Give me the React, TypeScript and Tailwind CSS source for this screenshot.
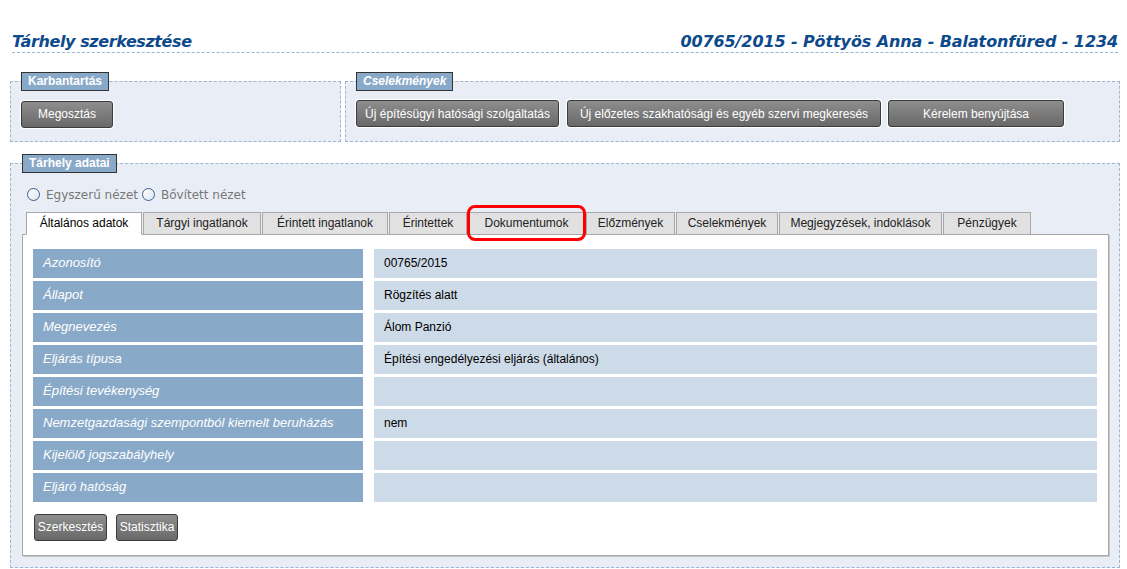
import React from "react";

const tabs = [
    { label: "Általános adatok", w: "w-[116px]", active: true },
    { label: "Tárgyi ingatlanok", w: "w-[118px]" },
    { label: "Érintett ingatlanok", w: "w-[126px]" },
    { label: "Érintettek", w: "w-[78px]" },
    { label: "Dokumentumok", w: "w-[117px]", marked: true },
    { label: "Előzmények", w: "w-[89px]" },
    { label: "Cselekmények", w: "w-[102px]" },
    { label: "Megjegyzések, indoklások", w: "w-[163px]" },
    { label: "Pénzügyek", w: "w-[88px]" },
];

const rows = [
    { label: "Azonosító", value: "00765/2015" },
    { label: "Állapot", value: "Rögzítés alatt" },
    { label: "Megnevezés", value: "Álom Panzió" },
    { label: "Eljárás típusa", value: "Építési engedélyezési eljárás (általános)" },
    { label: "Építési tevékenység", value: "" },
    { label: "Nemzetgazdasági szempontból kiemelt beruházás", value: "nem" },
    { label: "Kijelölő jogszabályhely", value: "" },
    { label: "Eljáró hatóság", value: "" },
];

function GrayButton({ children, className = "" }: { children: React.ReactNode; className?: string }) {
    return (
        <button
            className={
                "h-[27px] rounded-[3px] border border-[#3c3c3c] bg-gradient-to-b from-[#8e8e8e] to-[#696969] text-white text-[12px] shadow-[0_0_0_1px_#fff] font-['Liberation_Sans',Arial,sans-serif] whitespace-nowrap " +
                className
            }
        >
            {children}
        </button>
    );
}

function Legend({ children, italic }: { children: React.ReactNode; italic?: boolean }) {
    return (
        <legend
            className={
                "h-[19px] px-[6px] border border-[#333] bg-[#89a9c8] text-white font-bold text-[12px] leading-[17px] font-['Liberation_Sans',Arial,sans-serif] " +
                (italic ? "italic" : "")
            }
        >
            {children}
        </legend>
    );
}

function Radio({ label }: { label: string }) {
    return (
        <label className="flex items-center gap-[6px]">
            <span className="w-[13px] h-[13px] rounded-full border-[1.5px] border-[#3d5f8f] bg-gradient-to-br from-white to-[#dde6f0]"></span>
            <span>{label}</span>
        </label>
    );
}

export default function App() {
    return (
        <div className="w-[1127px] h-[569px] overflow-hidden bg-white pl-[10px] pr-[7px]">
            {/* header */}
            <div className="mx-[2px] h-[53px] flex items-end justify-between pb-0 border-b border-dashed border-[#9db5cf] text-[#0d4a8b] font-bold italic font-['DejaVu_Sans',Verdana,sans-serif]">
                <h1 className="text-[16px] leading-[21px] tracking-[-0.4px]">Tárhely szerkesztése</h1>
                <h2 className="text-[16px] leading-[21px] tracking-[-0.1px]">00765/2015 - Pöttyös Anna - Balatonfüred - 1234</h2>
            </div>

            {/* top fieldsets */}
            <div className="flex gap-[4px] mt-[19px] w-[1110px]">
                <fieldset className="w-[331px] border border-dashed border-[#9db5cf] bg-[#e9eef6] pl-[10px] pt-[9px] pb-[13px]">
                    <Legend>Karbantartás</Legend>
                    <GrayButton className="w-[92px]">Megosztás</GrayButton>
                </fieldset>
                <fieldset className="flex-1 border border-dashed border-[#9db5cf] bg-[#e9eef6] pl-[10px] pt-[9px] pb-[13px]">
                    <Legend italic>Cselekmények</Legend>
                    <div className="flex">
                        <GrayButton className="w-[203px]">Új építésügyi hatósági szolgáltatás</GrayButton>
                        <GrayButton className="w-[314px] ml-[8px]">Új előzetes szakhatósági és egyéb szervi megkeresés</GrayButton>
                        <GrayButton className="w-[176px] ml-[7px]">Kérelem benyújtása</GrayButton>
                    </div>
                </fieldset>
            </div>

            {/* data fieldset */}
            <fieldset className="mt-[12px] w-[1110px] border border-dashed border-[#9db5cf] bg-[#e9eef6] pl-[11px] pr-[10px] pt-[12px] pb-[11px]">
                <Legend>Tárhely adatai</Legend>
                <div className="flex items-center gap-[4px] pl-[5px] h-[16px] mt-[2px] text-[12px] text-[#777] font-['DejaVu_Sans',Verdana,sans-serif]">
                    <Radio label="Egyszerű nézet" />
                    <Radio label="Bővített nézet" />
                </div>

                <div className="mt-[9px]">
                    <div className="flex gap-[1px] pl-[4px] relative z-10">
                        {tabs.map((tab) => (
                            <div
                                key={tab.label}
                                className={
                                    "relative h-[23px] flex items-center justify-center text-[12px] font-['Liberation_Sans',Tahoma,sans-serif] border border-[#a8a8a8] " +
                                    tab.w +
                                    (tab.active ? " bg-white border-b-white text-black" : " bg-[#e1e1e1] text-[#222] h-[22px]")
                                }
                            >
                                {tab.label}
                                {tab.marked && (
                                    <span className="absolute -left-[2px] -right-[2px] -top-[8px] -bottom-[7px] border-[3px] border-[#ff0000] rounded-[8px]"></span>
                                )}
                            </div>
                        ))}
                    </div>

                    <div className="-mt-px bg-white border border-[#a8a8a8] shadow-[1px_1px_0_#c8c8c8] pl-[10px] pr-[11px] pt-[14px] pb-[14px]">
                        <div className="flex flex-col gap-[3px]">
                            {rows.map((row) => (
                                <div key={row.label} className="flex gap-[11px] h-[29px]">
                                    <div className="w-[330px] bg-[#89a9c8] text-white italic text-[13px] flex items-center pl-[10px] font-['Liberation_Sans',Arial,sans-serif]">
                                        {row.label}
                                    </div>
                                    <div className="flex-1 bg-[#cddae7] text-black text-[12px] flex items-center pl-[10px] font-['Liberation_Sans',Tahoma,sans-serif]">
                                        {row.value}
                                    </div>
                                </div>
                            ))}
                        </div>
                        <div className="flex gap-[9px] mt-[12px] pl-px">
                            <GrayButton className="w-[73px] h-[26px]">Szerkesztés</GrayButton>
                            <GrayButton className="w-[62px] h-[26px]">Statisztika</GrayButton>
                        </div>
                    </div>
                </div>
            </fieldset>
        </div>
    );
}
